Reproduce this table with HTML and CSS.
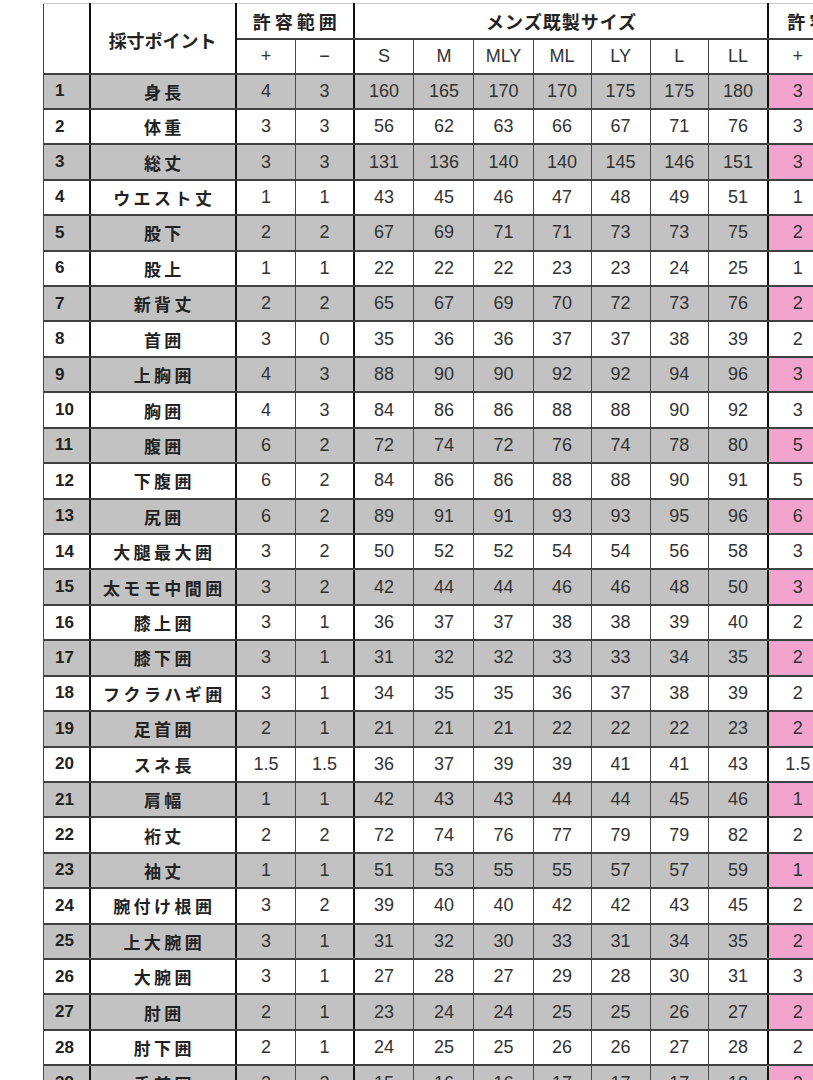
FILE: index.html
```html
<!DOCTYPE html>
<html lang="ja">
<head>
<meta charset="utf-8">
<title>採寸ポイント</title>
<link rel="stylesheet" href="styles.css">
</head>
<body>
<div class="wrap">
<table class="sheet">
<colgroup>
<col class="c-no"><col class="c-name"><col class="c-tol"><col class="c-tol2"><col class="c-sz"><col class="c-sz"><col class="c-sz2"><col class="c-sz3"><col class="c-sz2"><col class="c-sz3"><col class="c-sz"><col class="c-last">
</colgroup>
<thead>
<tr class="h1">
<th rowspan="2" class="no thick"></th>
<th rowspan="2" class="name thick jp tight">採寸ポイント</th>
<th colspan="2" class="grp jp thick">許容範囲</th>
<th colspan="7" class="grp jp thick mid">メンズ既製サイズ</th>
<th class="grp jp edge">許容範囲</th>
</tr>
<tr class="h2">
<th>+</th><th class="thick">−</th>
<th>S</th><th>M</th><th>MLY</th><th>ML</th><th>LY</th><th>L</th><th class="thick">LL</th>
<th>+</th>
</tr>
</thead>
<tbody>
<tr class="odd"><td class="no thick">1</td><td class="name thick">身長</td><td>4</td><td class="thick">3</td><td>160</td><td>165</td><td>170</td><td>170</td><td>175</td><td>175</td><td class="thick">180</td><td class="pk">3</td></tr>
<tr><td class="no thick">2</td><td class="name thick">体重</td><td>3</td><td class="thick">3</td><td>56</td><td>62</td><td>63</td><td>66</td><td>67</td><td>71</td><td class="thick">76</td><td>3</td></tr>
<tr class="odd"><td class="no thick">3</td><td class="name thick">総丈</td><td>3</td><td class="thick">3</td><td>131</td><td>136</td><td>140</td><td>140</td><td>145</td><td>146</td><td class="thick">151</td><td class="pk">3</td></tr>
<tr><td class="no thick">4</td><td class="name thick">ウエスト丈</td><td>1</td><td class="thick">1</td><td>43</td><td>45</td><td>46</td><td>47</td><td>48</td><td>49</td><td class="thick">51</td><td>1</td></tr>
<tr class="odd"><td class="no thick">5</td><td class="name thick">股下</td><td>2</td><td class="thick">2</td><td>67</td><td>69</td><td>71</td><td>71</td><td>73</td><td>73</td><td class="thick">75</td><td class="pk">2</td></tr>
<tr><td class="no thick">6</td><td class="name thick">股上</td><td>1</td><td class="thick">1</td><td>22</td><td>22</td><td>22</td><td>23</td><td>23</td><td>24</td><td class="thick">25</td><td>1</td></tr>
<tr class="odd"><td class="no thick">7</td><td class="name thick">新背丈</td><td>2</td><td class="thick">2</td><td>65</td><td>67</td><td>69</td><td>70</td><td>72</td><td>73</td><td class="thick">76</td><td class="pk">2</td></tr>
<tr><td class="no thick">8</td><td class="name thick">首囲</td><td>3</td><td class="thick">0</td><td>35</td><td>36</td><td>36</td><td>37</td><td>37</td><td>38</td><td class="thick">39</td><td>2</td></tr>
<tr class="odd"><td class="no thick">9</td><td class="name thick">上胸囲</td><td>4</td><td class="thick">3</td><td>88</td><td>90</td><td>90</td><td>92</td><td>92</td><td>94</td><td class="thick">96</td><td class="pk">3</td></tr>
<tr><td class="no thick">10</td><td class="name thick">胸囲</td><td>4</td><td class="thick">3</td><td>84</td><td>86</td><td>86</td><td>88</td><td>88</td><td>90</td><td class="thick">92</td><td>3</td></tr>
<tr class="odd"><td class="no thick">11</td><td class="name thick">腹囲</td><td>6</td><td class="thick">2</td><td>72</td><td>74</td><td>72</td><td>76</td><td>74</td><td>78</td><td class="thick">80</td><td class="pk">5</td></tr>
<tr><td class="no thick">12</td><td class="name thick">下腹囲</td><td>6</td><td class="thick">2</td><td>84</td><td>86</td><td>86</td><td>88</td><td>88</td><td>90</td><td class="thick">91</td><td>5</td></tr>
<tr class="odd"><td class="no thick">13</td><td class="name thick">尻囲</td><td>6</td><td class="thick">2</td><td>89</td><td>91</td><td>91</td><td>93</td><td>93</td><td>95</td><td class="thick">96</td><td class="pk">6</td></tr>
<tr><td class="no thick">14</td><td class="name thick">大腿最大囲</td><td>3</td><td class="thick">2</td><td>50</td><td>52</td><td>52</td><td>54</td><td>54</td><td>56</td><td class="thick">58</td><td>3</td></tr>
<tr class="odd"><td class="no thick">15</td><td class="name thick">太モモ中間囲</td><td>3</td><td class="thick">2</td><td>42</td><td>44</td><td>44</td><td>46</td><td>46</td><td>48</td><td class="thick">50</td><td class="pk">3</td></tr>
<tr><td class="no thick">16</td><td class="name thick">膝上囲</td><td>3</td><td class="thick">1</td><td>36</td><td>37</td><td>37</td><td>38</td><td>38</td><td>39</td><td class="thick">40</td><td>2</td></tr>
<tr class="odd"><td class="no thick">17</td><td class="name thick">膝下囲</td><td>3</td><td class="thick">1</td><td>31</td><td>32</td><td>32</td><td>33</td><td>33</td><td>34</td><td class="thick">35</td><td class="pk">2</td></tr>
<tr><td class="no thick">18</td><td class="name thick">フクラハギ囲</td><td>3</td><td class="thick">1</td><td>34</td><td>35</td><td>35</td><td>36</td><td>37</td><td>38</td><td class="thick">39</td><td>2</td></tr>
<tr class="odd"><td class="no thick">19</td><td class="name thick">足首囲</td><td>2</td><td class="thick">1</td><td>21</td><td>21</td><td>21</td><td>22</td><td>22</td><td>22</td><td class="thick">23</td><td class="pk">2</td></tr>
<tr><td class="no thick">20</td><td class="name thick">スネ長</td><td>1.5</td><td class="thick">1.5</td><td>36</td><td>37</td><td>39</td><td>39</td><td>41</td><td>41</td><td class="thick">43</td><td>1.5</td></tr>
<tr class="odd"><td class="no thick">21</td><td class="name thick">肩幅</td><td>1</td><td class="thick">1</td><td>42</td><td>43</td><td>43</td><td>44</td><td>44</td><td>45</td><td class="thick">46</td><td class="pk">1</td></tr>
<tr><td class="no thick">22</td><td class="name thick">裄丈</td><td>2</td><td class="thick">2</td><td>72</td><td>74</td><td>76</td><td>77</td><td>79</td><td>79</td><td class="thick">82</td><td>2</td></tr>
<tr class="odd"><td class="no thick">23</td><td class="name thick">袖丈</td><td>1</td><td class="thick">1</td><td>51</td><td>53</td><td>55</td><td>55</td><td>57</td><td>57</td><td class="thick">59</td><td class="pk">1</td></tr>
<tr><td class="no thick">24</td><td class="name thick">腕付け根囲</td><td>3</td><td class="thick">2</td><td>39</td><td>40</td><td>40</td><td>42</td><td>42</td><td>43</td><td class="thick">45</td><td>2</td></tr>
<tr class="odd"><td class="no thick">25</td><td class="name thick">上大腕囲</td><td>3</td><td class="thick">1</td><td>31</td><td>32</td><td>30</td><td>33</td><td>31</td><td>34</td><td class="thick">35</td><td class="pk">2</td></tr>
<tr><td class="no thick">26</td><td class="name thick">大腕囲</td><td>3</td><td class="thick">1</td><td>27</td><td>28</td><td>27</td><td>29</td><td>28</td><td>30</td><td class="thick">31</td><td>3</td></tr>
<tr class="odd"><td class="no thick">27</td><td class="name thick">肘囲</td><td>2</td><td class="thick">1</td><td>23</td><td>24</td><td>24</td><td>25</td><td>25</td><td>26</td><td class="thick">27</td><td class="pk">2</td></tr>
<tr><td class="no thick">28</td><td class="name thick">肘下囲</td><td>2</td><td class="thick">1</td><td>24</td><td>25</td><td>25</td><td>26</td><td>26</td><td>27</td><td class="thick">28</td><td>2</td></tr>
<tr class="odd"><td class="no thick">29</td><td class="name thick">手首囲</td><td>2</td><td class="thick">2</td><td>15</td><td>16</td><td>16</td><td>17</td><td>17</td><td>17</td><td class="thick">18</td><td class="pk">2</td></tr>
</tbody>
</table>
</div>
</body>
</html>
```
FILE: styles.css
```css
html, body {
  margin: 0;
  padding: 0;
  background: #ffffff;
  overflow: hidden;
}

.wrap {
  padding: 3px 0 0 43px;
  width: 800px;
}

.sheet {
  border-collapse: collapse;
  table-layout: fixed;
  width: 784px;
  font-family: "Liberation Sans", Arial, "Noto Sans CJK JP", sans-serif;
  font-size: 18px;
  color: #333333;
  border-left: 1px solid #666666;
  border-top: 1px solid #c8c8c8;
}

.c-no { width: 46px; }
.c-name { width: 146px; }
.c-tol { width: 60px; }
.c-tol2 { width: 58px; }
.c-sz { width: 60px; }
.c-sz2 { width: 59px; }
.c-sz3 { width: 58px; }
.c-last { width: 58px; }

.sheet th,
.sheet td {
  padding: 0;
  text-align: center;
  vertical-align: middle;
  border-left: 1px solid #4a4a4a;
  border-right: 1px solid #4a4a4a;
  border-top: 2px solid #404040;
  border-bottom: 2px solid #404040;
  white-space: nowrap;
  overflow: hidden;
}

.sheet thead tr { height: 35px; }
.sheet tbody tr { height: 35.43px; }

.sheet .h1 th {
  border-top: 1px solid #c8c8c8;
}

.sheet th {
  font-weight: normal;
}

.sheet .jp {
  font-family: "Noto Sans CJK JP", sans-serif;
  font-weight: 700;
  font-size: 18px;
  letter-spacing: 4px;
  padding-left: 4px;
  color: #222222;
}

.sheet .jp.tight {
  letter-spacing: 0;
  padding-left: 0;
  padding-top: 4px;
}

.sheet .jp.mid {
  letter-spacing: 1px;
  padding-left: 1px;
}

.sheet .jp.edge {
  text-align: left;
  padding-left: 18px;
  overflow: visible;
}

.sheet .thick {
  border-right: 2px solid #111111;
}

.sheet td.no {
  text-align: left;
  padding-left: 11px;
  font-weight: 700;
  font-size: 17px;
  color: #222222;
}

.sheet td.name {
  font-family: "Noto Sans CJK JP", sans-serif;
  font-weight: 700;
  font-size: 17px;
  letter-spacing: 3.5px;
  padding-left: 3.5px;
  color: #222222;
}

.sheet tr.odd td {
  background: #c2c2c2;
}

.sheet tr.odd td.pk {
  background: #f2a4cf;
}
```
